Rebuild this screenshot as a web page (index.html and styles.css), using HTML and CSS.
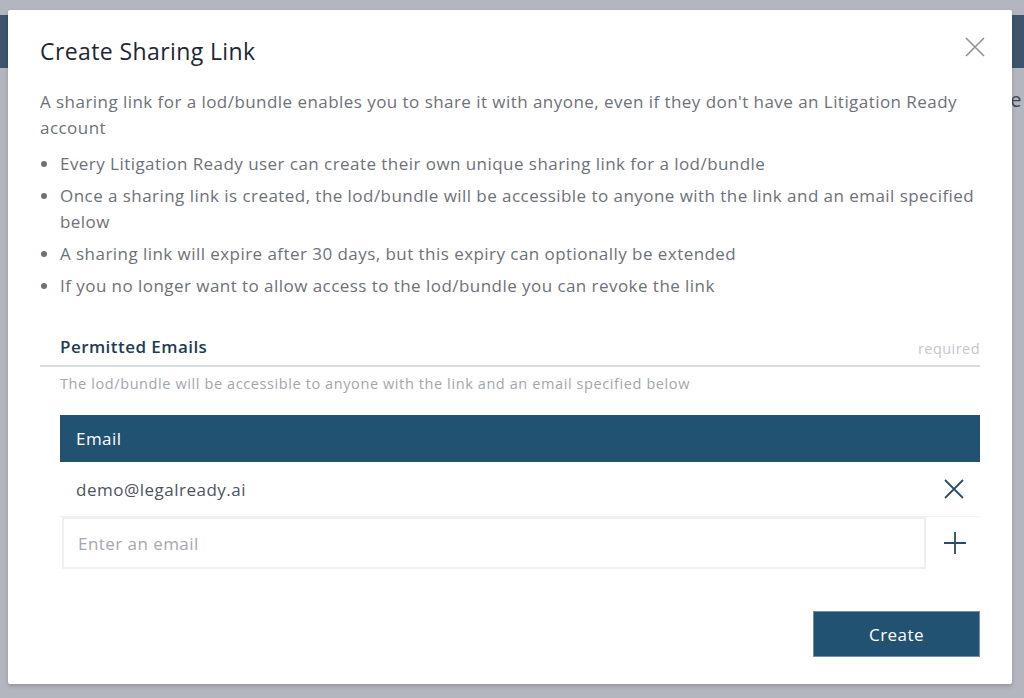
FILE: index.html
```html
<!DOCTYPE html>
<html>
<head>
<meta charset="utf-8">
<link rel="stylesheet" href="styles.css">
</head>
<body>
<div class="page">
  <div class="topbar"></div>
  <div class="page-text">The</div>
</div>
<div class="overlay">
  <div class="modal">
    <div class="modal-head">
      <h1 class="title">Create Sharing Link</h1>
      <button class="close" aria-label="Close">
        <svg width="22" height="22" viewBox="0 0 22 22"><path d="M2 2 L20 20 M20 2 L2 20" stroke="#8d929a" stroke-width="1.6" fill="none"/></svg>
      </button>
    </div>
    <p class="intro">A sharing link for a lod/bundle enables you to share it with anyone, even if they don't have an Litigation Ready account</p>
    <ul class="points">
      <li>Every Litigation Ready user can create their own unique sharing link for a lod/bundle</li>
      <li>Once a sharing link is created, the lod/bundle will be accessible to anyone with the link and an email specified below</li>
      <li>A sharing link will expire after 30 days, but this expiry can optionally be extended</li>
      <li>If you no longer want to allow access to the lod/bundle you can revoke the link</li>
    </ul>
    <div class="field-head">
      <span class="field-label">Permitted Emails</span>
      <span class="required">required</span>
    </div>
    <div class="field-help">The lod/bundle will be accessible to anyone with the link and an email specified below</div>
    <div class="table">
      <div class="thead">Email</div>
      <div class="row">
        <span class="email">demo@legalready.ai</span>
        <button class="icon-btn" aria-label="Remove">
          <svg width="22" height="22" viewBox="0 0 22 22"><path d="M2 2 L20 20 M20 2 L2 20" stroke="#2b4c68" stroke-width="1.8" fill="none"/></svg>
        </button>
      </div>
      <div class="input-row">
        <input class="email-input" type="text" placeholder="Enter an email">
        <button class="icon-btn add" aria-label="Add">
          <svg width="24" height="24" viewBox="0 0 24 24"><path d="M12 1 V23 M1 12 H23" stroke="#2b4c68" stroke-width="1.8" fill="none"/></svg>
        </button>
      </div>
    </div>
    <div class="actions">
      <button class="create">Create</button>
    </div>
  </div>
</div>
</body>
</html>
```

FILE: styles.css
```css
* { box-sizing: border-box; }
html, body { margin: 0; padding: 0; }
body {
  width: 1024px;
  height: 698px;
  overflow: hidden;
  font-family: "Open Sans", "Noto Sans", sans-serif;
  letter-spacing: 0.45px;
  background: #fff;
  position: relative;
}
.page { padding-top: 15px; }
.topbar { height: 53px; background: #244a6c; }
.page-text {
  margin-top: 18px;
  text-align: right;
  font-size: 20px;
  color: #333;
  padding-right: 2px;
}
.overlay {
  position: absolute;
  inset: 0;
  background: rgba(90, 96, 114, 0.46);
  padding: 10px 12px 14px 8px;
}
.modal {
  background: #fff;
  height: 674px;
  border-radius: 2px;
  box-shadow: 0 2px 4px rgba(0,0,0,0.18);
  padding: 26px 32px 0 32px;
}
.modal-head {
  display: flex;
  justify-content: space-between;
  align-items: flex-start;
}
.title {
  margin: 0;
  font-size: 23px;
  font-weight: 400;
  color: #1e2733;
  line-height: 30px;
  letter-spacing: 0.4px;
}
.close {
  border: 0;
  background: none;
  padding: 0;
  margin-top: 0;
  margin-right: -6px;
  cursor: pointer;
}
.intro {
  margin: 23px 0 0 0;
  font-size: 17px;
  line-height: 26px;
  color: #6d7179;
}
.points {
  margin: 10px 0 0 0;
  padding-left: 20px;
  font-size: 17px;
  line-height: 26px;
  color: #6d7179;
}
.points li { margin-bottom: 6px; }
.field-head {
  margin-top: 36px;
  display: flex;
  justify-content: space-between;
  align-items: flex-end;
  padding: 0 0 6px 20px;
  border-bottom: 2px solid #d6dee4;
}
.field-label {
  font-size: 17px;
  font-weight: 600;
  color: #1f3b55;
  line-height: 24px;
}
.required {
  font-size: 14.5px;
  color: #c3c6cc;
  line-height: 20px;
}
.field-help {
  padding-left: 20px;
  margin-top: 7px;
  font-size: 14.5px;
  letter-spacing: 0.6px;
  color: #a2a6ad;
  line-height: 20px;
}
.table { margin: 21px 0 0 20px; }
.thead {
  background: #225272;
  color: #fff;
  height: 47px;
  font-size: 17px;
  line-height: 47px;
  padding-left: 16px;
}
.row {
  height: 55px;
  display: flex;
  align-items: center;
  justify-content: space-between;
  padding: 0 15px 0 16px;
  border-bottom: 1px solid #f0f0f0;
}
.email { font-size: 17px; color: #4d5360; letter-spacing: 0.5px; }
.icon-btn {
  border: 0;
  background: none;
  padding: 0;
  display: flex;
  cursor: pointer;
}
.input-row {
  display: flex;
  align-items: center;
  height: 52px;
}
.email-input {
  flex: 1;
  height: 52px;
  margin-left: 2px;
  border: 2px solid #efefef;
  padding: 0 14px;
  font-family: inherit;
  font-size: 17px;
  letter-spacing: 0.45px;
  color: #4d5360;
  outline: none;
}
.email-input::placeholder { color: #a4a8af; }
.add { width: 54px; justify-content: center; padding-left: 4px; }
.actions {
  display: flex;
  justify-content: flex-end;
  margin-top: 42px;
}
.create {
  width: 167px;
  height: 46px;
  background: #225272;
  border: 1px solid #6f90ab;
  color: #fff;
  font-family: inherit;
  font-size: 17px;
  letter-spacing: 0.45px;
  cursor: pointer;
}
```
